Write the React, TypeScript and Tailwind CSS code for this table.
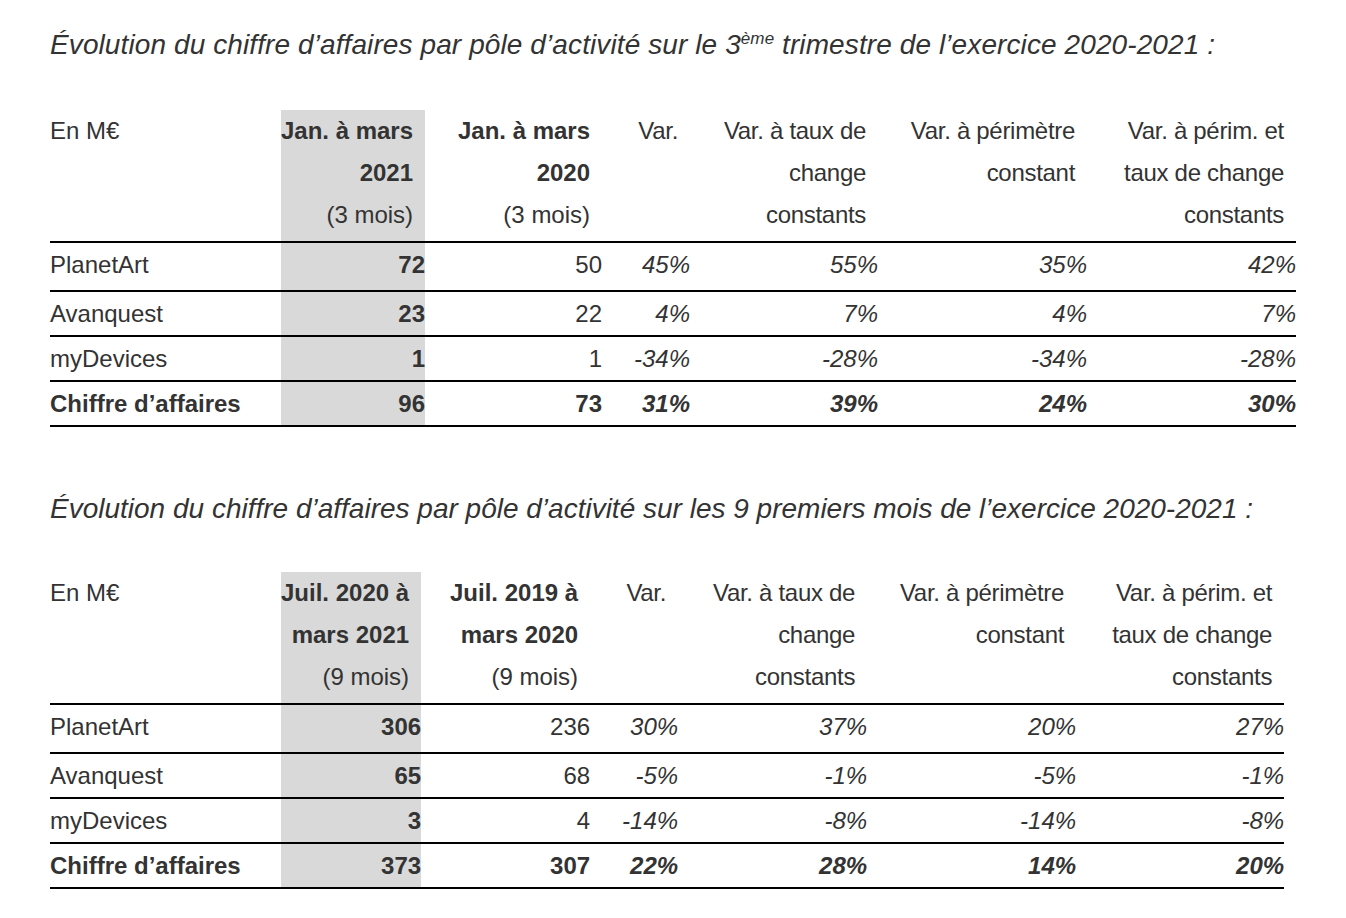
import React from "react"

type Row = {
  label: string
  current: string
  previous: string
  variations: string[]
  total?: boolean
}

type RevenueTableProps = {
  period: [string, string]
  periodPrev: [string, string]
  months: string
  widths: string[]
  rows: Row[]
}

const varHeaders: React.ReactNode[] = [
  <>Var.</>,
  <>
    Var. à taux de
    <br />
    change
    <br />
    constants
  </>,
  <>
    Var. à périmètre
    <br />
    constant
  </>,
  <>
    Var. à périm. et
    <br />
    taux de change
    <br />
    constants
  </>,
]

/**
 * Tableau du chiffre d'affaires par pôle
 */
const RevenueTable: React.FC<RevenueTableProps> = ({ period, periodPrev, months, widths, rows }) => (
  <table className="table-fixed border-collapse text-[24px] text-[#333333]">
    <colgroup>
      {widths.map((w, i) => (
        <col key={i} className={w} />
      ))}
    </colgroup>
    <thead>
      <tr className="border-b-2 border-black">
        <th className="align-top text-left font-normal leading-[42px] pb-[5px] whitespace-nowrap">En M€</th>
        <th className="align-top text-right leading-[42px] pr-3 pb-[5px] bg-[#d9d9d9] whitespace-nowrap">
          {period[0]}
          <br />
          {period[1]}
          <br />
          <span className="font-normal">({months})</span>
        </th>
        <th className="align-top text-right leading-[42px] pr-3 pb-[5px] whitespace-nowrap">
          {periodPrev[0]}
          <br />
          {periodPrev[1]}
          <br />
          <span className="font-normal">({months})</span>
        </th>
        {varHeaders.map((h, i) => (
          <th
            key={i}
            className="align-top text-right font-normal leading-[42px] pr-3 pb-[5px] tracking-[-0.3px] whitespace-nowrap"
          >
            {h}
          </th>
        ))}
      </tr>
    </thead>
    <tbody>
      {rows.map((row, i) => (
        <tr key={row.label} className={`border-b-2 border-black leading-[43px] ${i === 0 ? "[&>td]:pb-[4px]" : ""}`}>
          <td className={`whitespace-nowrap ${row.total ? "font-bold" : ""}`}>{row.label}</td>
          <td className="text-right font-bold bg-[#d9d9d9]">{row.current}</td>
          <td className={`text-right ${row.total ? "font-bold" : ""}`}>{row.previous}</td>
          {row.variations.map((v, j) => (
            <td key={j} className={`text-right italic ${row.total ? "font-bold" : ""}`}>
              {v}
            </td>
          ))}
        </tr>
      ))}
    </tbody>
  </table>
)

const quarterRows: Row[] = [
  { label: "PlanetArt", current: "72", previous: "50", variations: ["45%", "55%", "35%", "42%"] },
  { label: "Avanquest", current: "23", previous: "22", variations: ["4%", "7%", "4%", "7%"] },
  { label: "myDevices", current: "1", previous: "1", variations: ["-34%", "-28%", "-34%", "-28%"] },
  {
    label: "Chiffre d’affaires",
    current: "96",
    previous: "73",
    variations: ["31%", "39%", "24%", "30%"],
    total: true,
  },
]

const nineMonthRows: Row[] = [
  { label: "PlanetArt", current: "306", previous: "236", variations: ["30%", "37%", "20%", "27%"] },
  { label: "Avanquest", current: "65", previous: "68", variations: ["-5%", "-1%", "-5%", "-1%"] },
  { label: "myDevices", current: "3", previous: "4", variations: ["-14%", "-8%", "-14%", "-8%"] },
  {
    label: "Chiffre d’affaires",
    current: "373",
    previous: "307",
    variations: ["22%", "28%", "14%", "20%"],
    total: true,
  },
]

export default function App() {
  return (
    <div
      className="min-h-screen bg-white px-[50px] pt-[27px] text-[#333333]"
      style={{ fontFamily: '"Liberation Sans", Arial, sans-serif' }}
    >
      <h2 className="text-[28px] italic leading-[36px] whitespace-nowrap tracking-[0.1px]">
        Évolution du chiffre d’affaires par pôle d’activité sur le 3
        <sup className="text-[17px] -top-[0.6em]">ème</sup> trimestre de l’exercice 2020-2021 :
      </h2>

      <div className="mt-[47px]">
        <RevenueTable
          period={["Jan. à mars", "2021"]}
          periodPrev={["Jan. à mars", "2020"]}
          months="3 mois"
          widths={["w-[231px]", "w-[144px]", "w-[177px]", "w-[88px]", "w-[188px]", "w-[209px]", "w-[209px]"]}
          rows={quarterRows}
        />
      </div>

      <h2 className="mt-[64px] text-[28px] italic leading-[36px] whitespace-nowrap">
        Évolution du chiffre d’affaires par pôle d’activité sur les 9 premiers mois de l’exercice 2020-2021 :
      </h2>

      <div className="mt-[45px]">
        <RevenueTable
          period={["Juil. 2020 à", "mars 2021"]}
          periodPrev={["Juil. 2019 à", "mars 2020"]}
          months="9 mois"
          widths={["w-[231px]", "w-[140px]", "w-[169px]", "w-[88px]", "w-[189px]", "w-[209px]", "w-[208px]"]}
          rows={nineMonthRows}
        />
      </div>
    </div>
  )
}
